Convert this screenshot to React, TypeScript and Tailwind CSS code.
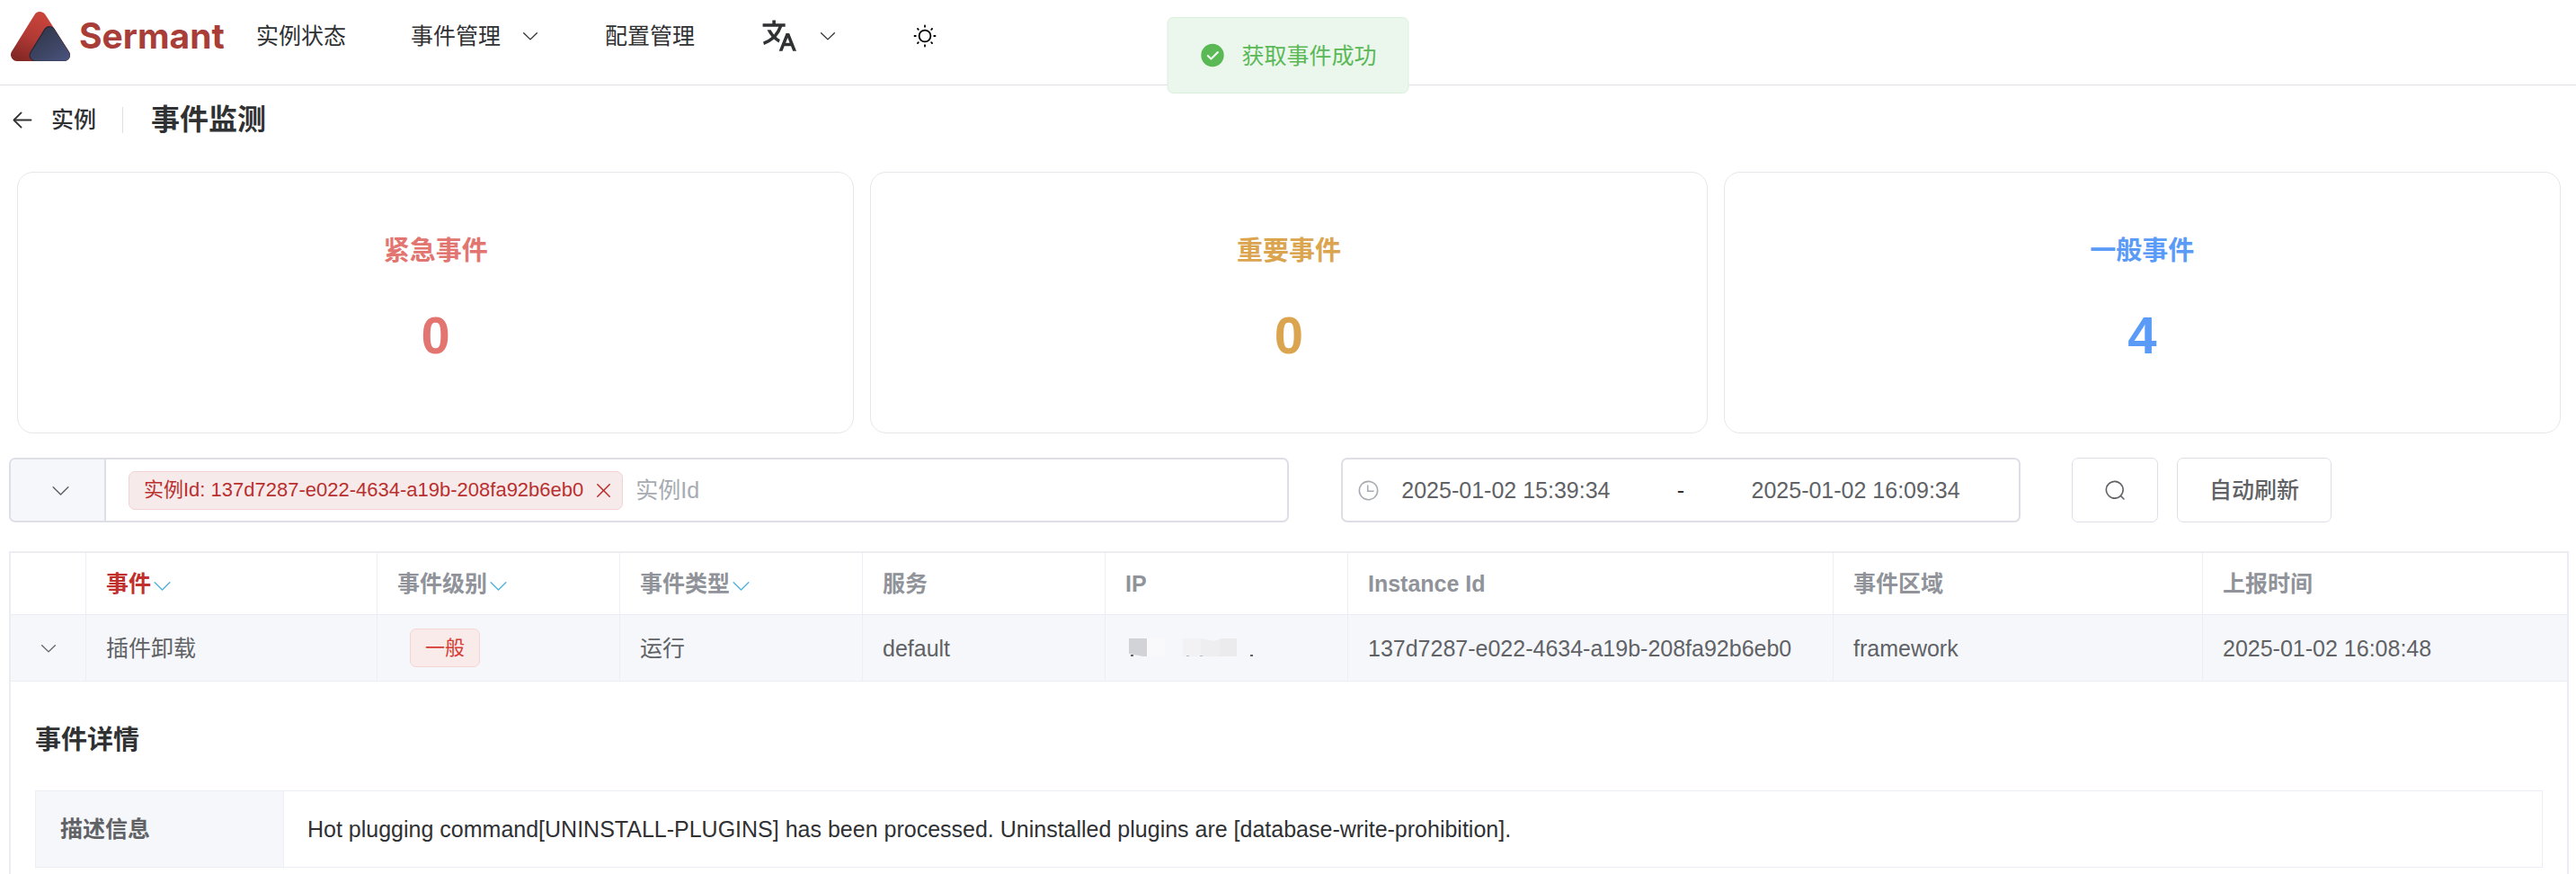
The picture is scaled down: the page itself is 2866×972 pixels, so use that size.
import type { ReactNode } from "react";

const ICONS = {
  arrowDown: [
    "M831.872 340.864 512 652.672 192.128 340.864a30.592 30.592 0 0 0-42.752 0 29.12 29.12 0 0 0 0 41.6L489.664 714.24a32 32 0 0 0 44.672 0l340.288-331.712a29.12 29.12 0 0 0 0-41.728 30.592 30.592 0 0 0-42.752 0z",
  ],
  back: [
    "M224 480h640a32 32 0 1 1 0 64H224a32 32 0 0 1 0-64z",
    "m237.248 512 265.408 265.344a32 32 0 0 1-45.312 45.312l-288-288a32 32 0 0 1 0-45.312l288-288a32 32 0 1 1 45.312 45.312L237.248 512z",
  ],
  close: [
    "M764.288 214.592 512 466.88 259.712 214.592a31.936 31.936 0 0 0-45.12 45.12L466.752 512 214.528 764.224a31.936 31.936 0 1 0 45.12 45.184L512 557.184l252.288 252.288a31.936 31.936 0 0 0 45.12-45.12L557.12 512.064l252.288-252.352a31.936 31.936 0 1 0-45.12-45.184z",
  ],
  search: [
    "m795.904 750.72 124.992 124.928a32 32 0 0 1-45.248 45.248L750.656 795.904a416 416 0 1 1 45.248-45.248zM480 832a352 352 0 1 0 0-704 352 352 0 0 0 0 704z",
  ],
  clock: [
    "M512 896a384 384 0 1 0 0-768 384 384 0 0 0 0 768m0 64a448 448 0 1 1 0-896 448 448 0 0 1 0 896",
    "M480 256a32 32 0 0 1 32 32v256a32 32 0 0 1-64 0V288a32 32 0 0 1 32-32",
    "M480 512h256q32 0 32 32t-32 32H480q-32 0-32-32t32-32",
  ],
  success: [
    "M512 64a448 448 0 1 1 0 896 448 448 0 0 1 0-896zm-55.808 536.384-99.52-99.584a38.4 38.4 0 1 0-54.336 54.336l126.72 126.72a38.272 38.272 0 0 0 54.336 0l262.4-262.464a38.4 38.4 0 1 0-54.272-54.336L456.192 600.384z",
  ],
};

function Icon({ name, className }: { name: keyof typeof ICONS; className: string }) {
  return (
    <svg viewBox="0 0 1024 1024" fill="currentColor" aria-hidden="true" className={className}>
      {ICONS[name].map((d) => (
        <path key={d} d={d} />
      ))}
    </svg>
  );
}

function Logo() {
  return (
    <a href="#home" className="flex w-[285px] shrink-0 items-center gap-[10px] pl-3">
      <svg width="66" height="55" viewBox="0 0 66 55" aria-hidden="true">
        <defs>
          <linearGradient id="red" gradientUnits="userSpaceOnUse" x1="36" y1="4" x2="14" y2="54">
            <stop offset="0" stopColor="#c8443b" />
            <stop offset="0.5" stopColor="#b23a34" />
            <stop offset="1" stopColor="#842825" />
          </linearGradient>
          <linearGradient id="navy" gradientUnits="userSpaceOnUse" x1="36" y1="20" x2="60" y2="55">
            <stop offset="0" stopColor="#33394d" />
            <stop offset="1" stopColor="#48517b" />
          </linearGradient>
        </defs>
        <path d="M32.500 7 L7 48 L59 48 Z" fill="url(#red)" stroke="url(#red)" strokeWidth="14" strokeLinejoin="round" />
        <path d="M43 22.500 L27 48.500 L59.500 48.500 Z" fill="#23283d" stroke="#23283d" strokeWidth="13" strokeLinejoin="round" />
        <path d="M43.500 23.500 L28 48.500 L59.500 48.500 Z" fill="url(#navy)" stroke="url(#navy)" strokeWidth="12.500" strokeLinejoin="round" />
      </svg>
      <span className="font-[Inter,sans-serif] text-[39px] leading-[44px] font-bold text-[#a83e37]">Sermant</span>
    </a>
  );
}

function Header() {
  return (
    <header className="flex h-[95px] items-center border-b border-[#dcdfe6] pb-3.5">
      <Logo />
      <nav className="flex items-center gap-[72px]">
        <a href="#instances">实例状态</a>
        <button type="button" className="flex items-center gap-[22px]">
          事件管理
          <Icon name="arrowDown" className="size-[22px]" />
        </button>
        <a href="#config">配置管理</a>
        <button type="button" aria-label="语言" className="flex items-center gap-[22px]">
          <svg viewBox="0 0 24 24" fill="currentColor" className="size-[43px]" aria-hidden="true">
            <path d="m18.5 10 4.400 11h-2.155l-1.201-3h-4.090l-1.199 3h-2.154L16.500 10zM10 2v2h6v2h-1.968a18.200 18.200 0 0 1-3.620 6.301a15 15 0 0 0 2.335 1.707l-.75 1.878A17 17 0 0 1 9 13.725a16.700 16.700 0 0 1-6.201 3.548l-.536-1.929a14.700 14.700 0 0 0 5.327-3.042A18 18 0 0 1 4.767 8h2.240A16 16 0 0 0 9 10.877a16.200 16.200 0 0 0 2.910-4.876L2 6V4h6V2zm7.500 10.885L16.253 16h2.492z" />
          </svg>
          <Icon name="arrowDown" className="size-[22px]" />
        </button>
        <button type="button" aria-label="主题" className="flex w-[50px] justify-center text-black">
          <svg viewBox="0 0 26 26" className="size-[26px]" fill="none" stroke="currentColor" strokeWidth="1.8" strokeLinecap="round" aria-hidden="true">
            <circle cx="13" cy="13" r="6.400" />
            <path d="M13 1.500v1.300M13 23.200v1.300M1.500 13h1.300M23.200 13h1.300M5 5l.8.8M20.200 20.200l.8.8M5 21l.8-.8M20.200 5.800l.8-.8" />
          </svg>
        </button>
      </nav>
    </header>
  );
}

function Toast() {
  return (
    <div
      role="status"
      className="absolute top-[19px] left-1/2 flex h-[85px] -translate-x-1/2 items-center gap-[18px] rounded-[7px] border border-[#daf0dd] bg-[#ebf6ed] px-[35px] whitespace-nowrap text-[#5ab955]"
    >
      <Icon name="success" className="size-[29px]" />
      获取事件成功
    </div>
  );
}

const STATS = [
  { label: "紧急事件", value: 0, color: "text-[#e37571]" },
  { label: "重要事件", value: 0, color: "text-[#dba550]" },
  { label: "一般事件", value: 4, color: "text-[#5b9bf8]" },
];

function Stats() {
  return (
    <section className="grid grid-cols-3 gap-[18px] px-[9px]">
      {STATS.map((s) => (
        <div
          key={s.label}
          className={`flex h-[291px] flex-col items-center gap-11 rounded-[18px] border border-[#e6e7ea] pt-[67px] font-bold ${s.color}`}
        >
          <h2 className="text-[29px] leading-[40px]">{s.label}</h2>
          <p className="text-[58px] leading-[60px]">{s.value}</p>
        </div>
      ))}
    </section>
  );
}

function Tag({ children, className }: { children: ReactNode; className: string }) {
  return (
    <span className={`inline-flex h-[43px] items-center rounded-[7px] border text-[22px] leading-[22px] ${className}`}>
      {children}
    </span>
  );
}

const DATE_INPUT = "w-[39%] min-w-0 bg-transparent text-center text-[#606266] outline-none";

function Filters() {
  return (
    <form className="mt-[27px] flex items-center">
      <div className="flex h-[72px] w-1/2 overflow-hidden rounded-[7px] border-2 border-[#dedfe6]">
        <div className="relative w-[106px] shrink-0 border-r-2 border-[#dedfe6] bg-[#f5f7fa]">
          <select aria-label="筛选条件" defaultValue="" className="size-full appearance-none bg-transparent outline-none">
            <option value="" />
          </select>
          <Icon name="arrowDown" className="pointer-events-none absolute inset-y-0 right-9 my-auto size-[25px] text-[#606266]" />
        </div>
        <div className="flex min-w-0 flex-1 items-center gap-3.5 pl-[25px]">
          <Tag className="shrink-0 border-[#f2d2d2] bg-[#f7eaea] pr-2 pl-4 whitespace-nowrap text-[#b9302f]">
            实例Id: 137d7287-e022-4634-a19b-208fa92b6eb0
            <button type="button" aria-label="移除" className="ml-2.5">
              <Icon name="close" className="size-[25px]" />
            </button>
          </Tag>
          <input
            type="text"
            aria-label="实例Id"
            placeholder="实例Id"
            className="min-w-0 flex-1 bg-transparent outline-none placeholder:text-[#a8abb2]"
          />
        </div>
      </div>
      <div className="ml-[58px] flex h-[72px] w-[756px] items-center rounded-[7px] border-2 border-[#dedfe6] px-4">
        <Icon name="clock" className="size-[25px] shrink-0 text-[#a8abb2]" />
        <input type="text" aria-label="开始时间" defaultValue="2025-01-02 15:39:34" className={DATE_INPUT} />
        <span className="flex-1 text-center">-</span>
        <input type="text" aria-label="结束时间" defaultValue="2025-01-02 16:09:34" className={DATE_INPUT} />
        <span className="w-[25px] shrink-0" />
      </div>
      <button
        type="button"
        aria-label="搜索"
        className="ml-[57px] flex h-[72px] w-24 items-center justify-center rounded-[7px] border border-[#dcdfe6] text-[#606266]"
      >
        <Icon name="search" className="size-[25px]" />
      </button>
      <button
        type="button"
        className="ml-[21px] h-[72px] w-[172px] rounded-[7px] border border-[#dcdfe6] font-medium text-[#606266]"
      >
        自动刷新
      </button>
    </form>
  );
}

const COLUMNS = [
  { title: "", width: "w-[84px]" },
  { title: "事件", width: "w-[324px]", filter: true, active: true },
  { title: "事件级别", width: "w-[270px]", filter: true },
  { title: "事件类型", width: "w-[270px]", filter: true },
  { title: "服务", width: "w-[270px]" },
  { title: "IP", width: "w-[270px]" },
  { title: "Instance Id", width: "w-[540px]" },
  { title: "事件区域", width: "w-[411px]" },
  { title: "上报时间", width: "w-auto" },
];

function MaskedIp() {
  return (
    <svg width="146" height="24" viewBox="0 0 146 24" role="img" aria-label="IP" className="block">
      <path d="M4 1h20v20h-4l-16-3z" fill="#d2d3d6" />
      <path d="M24 1h20v20h-20z" fill="#f9f9fb" />
      <path d="M64 1h20v20h-20z" fill="#f2f2f4" />
      <path d="M84 1l14 3 7-2v19h-21z" fill="#eeeef0" />
      <path d="M105 2l3-1h16v20h-19z" fill="#ebebed" />
      <path d="M6 19h3v2h-3zM139 19h3v2h-3z" fill="#606266" />
      <path d="M68 20h3v1h-3zM83 20h3v1h-3z" fill="#b5b6ba" />
    </svg>
  );
}

function EventTable() {
  const cell = "border-r border-b border-[#ebeef5] px-[22px] last:border-r-0";
  return (
    <section className="mt-8 flex-1 border-x-2 border-t-2 border-[#ebedf3]">
      <table className="w-full table-fixed border-separate border-spacing-0 text-left text-[#606266]">
        <thead>
          <tr className="h-[69px]">
            {COLUMNS.map((c) => (
              <th
                key={c.title}
                className={`${cell} ${c.width} font-bold ${c.active ? "text-[#c0302d]" : "text-[#909399]"}`}
              >
                {c.title}
                {c.filter && (
                  <button type="button" aria-label="筛选" className="align-middle text-[#56b4dd]">
                    <Icon name="arrowDown" className="size-[25px]" />
                  </button>
                )}
              </th>
            ))}
          </tr>
        </thead>
        <tbody>
          <tr className="h-[74px] bg-[#f5f7fa]">
            <td className="border-r border-b border-[#ebeef5]">
              <button type="button" aria-label="展开" className="mx-auto block">
                <Icon name="arrowDown" className="size-[22px]" />
              </button>
            </td>
            <td className={cell}>插件卸载</td>
            <td className={cell}>
              <Tag className="ml-3.5 border-[#f5d5d3] bg-[#f9ebea] px-4 align-middle text-[#d63c34]">一般</Tag>
            </td>
            <td className={cell}>运行</td>
            <td className={cell}>default</td>
            <td className={cell}>
              <MaskedIp />
            </td>
            <td className={cell}>137d7287-e022-4634-a19b-208fa92b6eb0</td>
            <td className={cell}>framework</td>
            <td className={cell}>2025-01-02 16:08:48</td>
          </tr>
          <tr>
            <td colSpan={9} className="px-[27px] pt-[45px] text-[#303133]">
              <h3 className="text-[29px] leading-[40px] font-bold">事件详情</h3>
              <table className="mt-9 w-full table-fixed border-collapse">
                <tbody>
                  <tr className="h-[85px]">
                    <th className="w-[276px] border border-[#ebeef5] bg-[#f5f7fa] px-[27px] font-bold text-[#606266]">
                      描述信息
                    </th>
                    <td className="border border-[#ebeef5] px-[26px]">
                      Hot plugging command[UNINSTALL-PLUGINS] has been processed. Uninstalled plugins are
                      [database-write-prohibition].
                    </td>
                  </tr>
                </tbody>
              </table>
            </td>
          </tr>
        </tbody>
      </table>
    </section>
  );
}

export default function App() {
  return (
    <div className="relative flex min-h-screen flex-col bg-white font-['Liberation_Sans','Noto_Sans_CJK_SC',sans-serif] text-[25px] leading-[36px] text-[#303133]">
      <Header />
      <Toast />
      <main className="flex flex-1 flex-col pr-2 pl-[10px]">
        <div className="flex h-[96px] items-center pb-5">
          <button type="button" className="flex items-center gap-[18px] font-medium">
            <Icon name="back" className="size-[29px]" />
            实例
          </button>
          <span className="mr-[31px] ml-[29px] h-[29px] w-px bg-[#dcdfe6]" />
          <h1 className="text-[32px] leading-[40px] font-bold">事件监测</h1>
        </div>
        <Stats />
        <Filters />
        <EventTable />
      </main>
    </div>
  );
}
